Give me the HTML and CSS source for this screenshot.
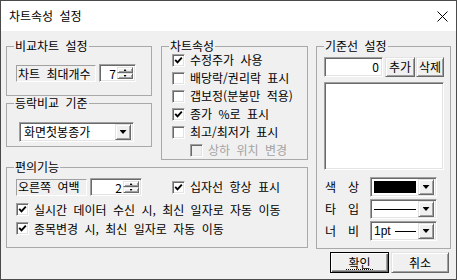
FILE: index.html
```html
<!DOCTYPE html>
<html lang="ko">
<head>
<meta charset="utf-8">
<title>차트속성 설정</title>
<link rel="stylesheet" href="styles.css">
</head>
<body>
<div class="window">
  <div class="titlebar">
    <span class="title">차트속성 설정</span>
    <svg class="close" width="11" height="11" viewBox="0 0 11 11"><path d="M0.5 0.5 L10.5 10.5 M10.5 0.5 L0.5 10.5" stroke="#000" stroke-width="1" fill="none"/></svg>
  </div>
  <div class="client">
    <div class="main">
      <div class="leftpane">
        <div class="toprow">
          <div class="leftcol">
            <fieldset class="group g1">
              <legend>비교차트 설정</legend>
              <div class="body g1-body">
                <span class="static st-max">차트 최대개수</span>
                <div class="spin sp-max"><span class="val">7</span><div class="spinbtns"><i class="up"></i><i class="down"></i></div></div>
              </div>
            </fieldset>
            <fieldset class="group g2">
              <legend>등락비교 기준</legend>
              <div class="body g2-body">
                <div class="combo cb-base"><span class="ctext">화면첫봉종가</span><span class="drop"></span></div>
              </div>
            </fieldset>
          </div>
          <fieldset class="group g-props">
            <legend>차트속성</legend>
            <div class="body props-body">
              <div class="chk"><span class="box"><svg width="9" height="9" viewBox="0 0 9 9"><path d="M1.2 3.8 L3.5 6.3 L7.8 1.6" stroke="#000" stroke-width="1.9" fill="none"/></svg></span><span>수정주가 사용</span></div>
              <div class="chk"><span class="box"></span><span>배당락/권리락 표시</span></div>
              <div class="chk"><span class="box"></span><span>갭보정(분봉만 적용)</span></div>
              <div class="chk"><span class="box"><svg width="9" height="9" viewBox="0 0 9 9"><path d="M1.2 3.8 L3.5 6.3 L7.8 1.6" stroke="#000" stroke-width="1.9" fill="none"/></svg></span><span>종가 %로 표시</span></div>
              <div class="chk"><span class="box"></span><span>최고/최저가 표시</span></div>
              <div class="chk disabled"><span class="box"></span><span>상하 위치 변경</span></div>
            </div>
          </fieldset>
        </div>
        <fieldset class="group g3">
          <legend>편의기능</legend>
          <div class="body g3-body">
            <div class="g3-row1">
              <div class="g3-left">
                <span class="static st-margin">오른쪽 여백</span>
                <div class="spin sp-margin"><span class="val">2</span><div class="spinbtns"><i class="up"></i><i class="down"></i></div></div>
              </div>
              <div class="chk"><span class="box"><svg width="9" height="9" viewBox="0 0 9 9"><path d="M1.2 3.8 L3.5 6.3 L7.8 1.6" stroke="#000" stroke-width="1.9" fill="none"/></svg></span><span>십자선 항상 표시</span></div>
            </div>
            <div class="chk row19"><span class="box"><svg width="9" height="9" viewBox="0 0 9 9"><path d="M1.2 3.8 L3.5 6.3 L7.8 1.6" stroke="#000" stroke-width="1.9" fill="none"/></svg></span><span>실시간 데이터 수신 시, 최신 일자로 자동 이동</span></div>
            <div class="chk row19"><span class="box"><svg width="9" height="9" viewBox="0 0 9 9"><path d="M1.2 3.8 L3.5 6.3 L7.8 1.6" stroke="#000" stroke-width="1.9" fill="none"/></svg></span><span>종목변경 시, 최신 일자로 자동 이동</span></div>
          </div>
        </fieldset>
      </div>
      <fieldset class="group g-right">
        <legend>기준선 설정</legend>
        <div class="body right-body">
          <div class="addrow">
            <div class="edit"><span>0</span></div>
            <div class="btn small b-add">추가</div>
            <div class="btn small b-del">삭제</div>
          </div>
          <div class="listbox"></div>
          <div class="proprow">
            <span class="plabel"><span>색</span><span>상</span></span>
            <div class="combo cb-prop"><span class="swatch"></span><span class="drop"></span></div>
          </div>
          <div class="proprow">
            <span class="plabel"><span>타</span><span>입</span></span>
            <div class="combo cb-prop"><span class="linefill"><span class="line full"></span></span><span class="drop"></span></div>
          </div>
          <div class="proprow">
            <span class="plabel"><span>너</span><span>비</span></span>
            <div class="combo cb-prop"><span class="linefill"><span class="pt">1pt</span><span class="line"></span></span><span class="drop"></span></div>
          </div>
        </div>
      </fieldset>
    </div>
    <div class="buttons">
      <div class="btn big default"><span class="focus">확인</span></div>
      <div class="btn big">취소</div>
    </div>
  </div>
</div>
</body>
</html>
```
FILE: styles.css
```css
* { box-sizing: border-box; }

body {
  margin: 0;
  font-family: "Noto Sans CJK KR", "Noto Sans", sans-serif;
  font-size: 12px;
  line-height: 14px;
  word-spacing: 3px;
  color: #000;
  background: #fff;
}

.window {
  width: 457px;
  height: 280px;
  border: 1px solid #4a4a4a;
  background: #f0f0f0;
  display: flex;
  flex-direction: column;
}

.titlebar {
  height: 30px;
  background: #fff;
  display: flex;
  align-items: center;
  justify-content: space-between;
  padding: 0 8px 0 8px;
  flex: none;
}

.close { display: block; }

.client {
  flex: 1;
  padding: 8px 5px 0 5px;
}

.main {
  display: flex;
  gap: 8px;
}

.leftpane { width: 302px; }

.toprow {
  display: flex;
  gap: 9px;
  height: 121px;
}

.leftcol {
  width: 146px;
  display: flex;
  flex-direction: column;
}

fieldset.group {
  margin: 0;
  padding: 0;
  border: 1px solid #a9a9a9;
  min-width: 0;
}

legend {
  padding: 0 1px;
  margin-left: 7px;
  line-height: 14px;
}

/* sunken / raised edges */
.static {
  display: flex;
  align-items: center;
  height: 17px;
  border: 1px solid;
  border-color: #a0a0a0 #fff #fff #a0a0a0;
  padding-left: 1px;
  white-space: nowrap;
}

.spin, .combo, .edit, .listbox {
  background: #fff;
  border: 1px solid;
  border-color: #a0a0a0 #fff #fff #a0a0a0;
  box-shadow: inset 1px 1px 0 #696969, inset -1px -1px 0 #e3e3e3;
}

.btn, .spinbtns i, .drop {
  background: #f0f0f0;
  border: 1px solid;
  border-color: #e3e3e3 #696969 #696969 #e3e3e3;
  box-shadow: inset 1px 1px 0 #fff, inset -1px -1px 0 #a0a0a0;
}

/* G1 */
.g1 { height: 57px; }
.g1-body {
  display: flex;
  align-items: flex-start;
  padding: 11px 0 0 9px;
}
.st-max { width: 80px; margin-top: 1px; }

.spin {
  display: flex;
  height: 18px;
  padding: 2px;
}
.sp-max { width: 37px; margin-left: 3px; }
.spin .val {
  flex: 1;
  text-align: right;
  padding-right: 1px;
  line-height: 14px;
}
.spinbtns {
  width: 16px;
  display: flex;
  flex-direction: column;
}
.spinbtns i {
  flex: 1;
  display: flex;
  align-items: center;
  justify-content: center;
}
.spinbtns i::after {
  content: "";
  width: 3px;
  height: 2px;
  background: #000;
}
.spinbtns i.up::after { clip-path: polygon(50% 0, 100% 100%, 0 100%); }
.spinbtns i.down::after { clip-path: polygon(0 0, 100% 0, 50% 100%); }

/* G2 */
.g2 { height: 51px; margin-top: 13px; }
.g2-body { padding: 12px 0 0 12px; }

.combo {
  display: flex;
  align-items: center;
  height: 20px;
  padding: 2px;
}
.cb-base { width: 115px; }
.ctext { flex: 1; padding-left: 2px; white-space: nowrap; }
.drop {
  width: 16px;
  height: 16px;
  flex: none;
  display: flex;
  align-items: center;
  justify-content: center;
}
.drop::after {
  content: "";
  width: 7px;
  height: 4px;
  background: #000;
  clip-path: polygon(0 0, 100% 0, 50% 100%);
}

/* props */
.g-props { width: 147px; height: 121px; }
.props-body { padding: 0 0 0 10px; margin-top: -2px; }

.chk {
  display: flex;
  align-items: center;
  height: 18px;
  white-space: nowrap;
}
.chk .box {
  width: 13px;
  height: 13px;
  flex: none;
  margin-right: 5px;
  background: #fff;
  border: 1px solid;
  border-color: #a0a0a0 #fff #fff #a0a0a0;
  box-shadow: inset 1px 1px 0 #696969, inset -1px -1px 0 #e3e3e3;
  display: flex;
  align-items: center;
  justify-content: center;
}
.chk .box svg { display: block; }
.chk.disabled { padding-left: 18px; color: #a3a3a3; }
.chk.disabled .box { background: #f0f0f0; }

/* G3 */
.g3 { height: 88px; }
.g3-body { padding: 4px 0 0 9px; }
.g3-row1 {
  display: grid;
  grid-template-columns: 156px auto;
  height: 18px;
  align-items: center;
}
.g3-left { display: flex; align-items: center; }
.st-margin { width: 71px; }
.sp-margin { width: 52px; margin-left: 3px; }
.g3-body .chk.row19 { height: 19px; }
.g3-row1 + .chk { margin-top: 4px; }

/* right */
.g-right { width: 135px; height: 210px; }
.right-body { padding: 4px 0 0 7px; }

.addrow { display: flex; height: 20px; }
.edit {
  width: 59px;
  height: 20px;
  text-align: right;
  padding: 2px 3px 0 0;
}
.btn {
  display: flex;
  align-items: center;
  justify-content: center;
  white-space: nowrap;
}
.btn.small { height: 20px; }
.b-add { width: 30px; margin-left: 2px; }
.b-del { width: 28px; margin-left: 1px; }

.listbox {
  width: 120px;
  height: 88px;
  margin-top: 5px;
}

.proprow {
  display: flex;
  align-items: center;
  height: 20px;
  margin-top: 2px;
}
.listbox + .proprow { margin-top: 7px; }
.plabel {
  width: 34px;
  margin-left: 1px;
  margin-right: 11px;
  display: flex;
  justify-content: space-between;
}
.cb-prop { width: 67px; }
.swatch {
  flex: 1;
  align-self: stretch;
  margin: 1px 2px 1px 1px;
  background: #000;
}
.linefill {
  flex: 1;
  display: flex;
  align-items: center;
  padding: 0 2px 0 1px;
  height: 100%;
}
.line { flex: 1; height: 1px; background: #000; }
.pt {
  font-family: "Liberation Sans", "DejaVu Sans", sans-serif;
  font-size: 12px;
  margin-right: 4px;
  word-spacing: 0;
}

/* bottom buttons */
.buttons {
  display: flex;
  justify-content: flex-end;
  gap: 2px;
  margin-top: 3px;
  padding-right: 2px;
}
.btn.big { height: 21px; width: 58px; }
.btn.default {
  width: 59px;
  border-color: #000;
  box-shadow: inset 1px 1px 0 #fff, inset -1px -1px 0 #696969, inset -2px -2px 0 #a0a0a0;
}
.focus {
  border-bottom: 1px dotted #000;
  padding: 0 2px;
  line-height: 13px;
}
```
